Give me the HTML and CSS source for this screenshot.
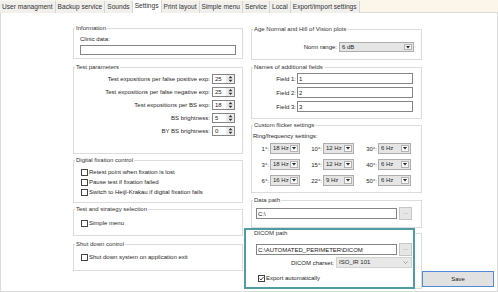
FILE: index.html
```html
<!DOCTYPE html>
<html>
<head>
    <title>Settings</title>
    <link rel="stylesheet" href="styles.css">
</head>
<body>
    <div class="tabs">
        <div class="tab">User managment</div>
        <div class="tab">Backup service</div>
        <div class="tab">Sounds</div>
        <div class="tab active">Settings</div>
        <div class="tab">Print layout</div>
        <div class="tab">Simple menu</div>
        <div class="tab">Service</div>
        <div class="tab">Local</div>
        <div class="tab">Export/import settings</div>
    </div>

    <div class="page">
        <!-- Left column -->
        <div class="col col-left">
            <fieldset class="group info">
                <legend>Information</legend>
                <div class="label">Clinic data:</div>
                <input class="textbox" type="text" value="">
            </fieldset>

            <fieldset class="group params">
                <legend>Test parameters</legend>
                <div class="param-row"><span>Test expositions per false positive exp:</span><div class="spin"><span class="spin-val">25</span><span class="spin-btn"><svg width="5" height="8" viewBox="0 0 5 8"><path d="M0.5 3.2 L2.5 1 L4.5 3.2 Z M0.5 4.8 L2.5 7 L4.5 4.8 Z" fill="#333"/></svg></span></div></div>
                <div class="param-row"><span>Test expositions per false negative exp:</span><div class="spin"><span class="spin-val">25</span><span class="spin-btn"><svg width="5" height="8" viewBox="0 0 5 8"><path d="M0.5 3.2 L2.5 1 L4.5 3.2 Z M0.5 4.8 L2.5 7 L4.5 4.8 Z" fill="#333"/></svg></span></div></div>
                <div class="param-row"><span>Test expositions per BS exp:</span><div class="spin"><span class="spin-val">18</span><span class="spin-btn"><svg width="5" height="8" viewBox="0 0 5 8"><path d="M0.5 3.2 L2.5 1 L4.5 3.2 Z M0.5 4.8 L2.5 7 L4.5 4.8 Z" fill="#333"/></svg></span></div></div>
                <div class="param-row"><span>BS brightness:</span><div class="spin"><span class="spin-val">5</span><span class="spin-btn"><svg width="5" height="8" viewBox="0 0 5 8"><path d="M0.5 3.2 L2.5 1 L4.5 3.2 Z M0.5 4.8 L2.5 7 L4.5 4.8 Z" fill="#333"/></svg></span></div></div>
                <div class="param-row"><span>BY BS brightness:</span><div class="spin"><span class="spin-val">0</span><span class="spin-btn"><svg width="5" height="8" viewBox="0 0 5 8"><path d="M0.5 3.2 L2.5 1 L4.5 3.2 Z M0.5 4.8 L2.5 7 L4.5 4.8 Z" fill="#333"/></svg></span></div></div>
            </fieldset>

            <fieldset class="group fixation">
                <legend>Digital fixation control</legend>
                <div class="check-row"><span class="box"></span>Retest point when fixation is lost</div>
                <div class="check-row"><span class="box"></span>Pause test if fixation failed</div>
                <div class="check-row"><span class="box"></span>Switch to Heijl-Krakau if digital fixation fails</div>
            </fieldset>

            <fieldset class="group strategy">
                <legend>Test and strategy selection</legend>
                <div class="check-row"><span class="box"></span>Simple menu</div>
            </fieldset>

            <fieldset class="group shutdown">
                <legend>Shut down control</legend>
                <div class="check-row"><span class="box"></span>Shut down system on application exit</div>
            </fieldset>
        </div>

        <!-- Right column -->
        <div class="col col-right">
            <fieldset class="group age">
                <legend>Age Normal and Hill of Vision plots</legend>
                <div class="norm-row">
                    <span>Norm range:</span>
                    <div class="combo norm"><span class="combo-val">6 dB</span><span class="combo-btn"><svg width="4" height="3" viewBox="0 0 4 3"><path d="M0 0 H4 L2 2.5 Z" fill="#222"/></svg></span></div>
                </div>
            </fieldset>

            <fieldset class="group names">
                <legend>Names of additional fields</legend>
                <div class="field-row"><span>Field 1:</span><input class="textbox" type="text" value="1"></div>
                <div class="field-row"><span>Field 2:</span><input class="textbox" type="text" value="2"></div>
                <div class="field-row"><span>Field 3:</span><input class="textbox" type="text" value="3"></div>
            </fieldset>

            <fieldset class="group flicker">
                <legend>Custom flicker settings</legend>
                <div class="label ring">Ring/frequency settings:</div>
                <div class="freq-grid">
                    <span class="freq-label">1°:</span>
                    <div class="combo"><span class="combo-val">18 Hz</span><span class="combo-btn"><svg width="4" height="3" viewBox="0 0 4 3"><path d="M0 0 H4 L2 2.5 Z" fill="#222"/></svg></span></div>
                    <span class="freq-label">10°:</span>
                    <div class="combo"><span class="combo-val">12 Hz</span><span class="combo-btn"><svg width="4" height="3" viewBox="0 0 4 3"><path d="M0 0 H4 L2 2.5 Z" fill="#222"/></svg></span></div>
                    <span class="freq-label">30°:</span>
                    <div class="combo"><span class="combo-val">6 Hz</span><span class="combo-btn"><svg width="4" height="3" viewBox="0 0 4 3"><path d="M0 0 H4 L2 2.5 Z" fill="#222"/></svg></span></div>

                    <span class="freq-label">3°:</span>
                    <div class="combo"><span class="combo-val">18 Hz</span><span class="combo-btn"><svg width="4" height="3" viewBox="0 0 4 3"><path d="M0 0 H4 L2 2.5 Z" fill="#222"/></svg></span></div>
                    <span class="freq-label">15°:</span>
                    <div class="combo"><span class="combo-val">12 Hz</span><span class="combo-btn"><svg width="4" height="3" viewBox="0 0 4 3"><path d="M0 0 H4 L2 2.5 Z" fill="#222"/></svg></span></div>
                    <span class="freq-label">40°:</span>
                    <div class="combo"><span class="combo-val">6 Hz</span><span class="combo-btn"><svg width="4" height="3" viewBox="0 0 4 3"><path d="M0 0 H4 L2 2.5 Z" fill="#222"/></svg></span></div>

                    <span class="freq-label">6°:</span>
                    <div class="combo"><span class="combo-val">16 Hz</span><span class="combo-btn"><svg width="4" height="3" viewBox="0 0 4 3"><path d="M0 0 H4 L2 2.5 Z" fill="#222"/></svg></span></div>
                    <span class="freq-label">22°:</span>
                    <div class="combo"><span class="combo-val">9 Hz</span><span class="combo-btn"><svg width="4" height="3" viewBox="0 0 4 3"><path d="M0 0 H4 L2 2.5 Z" fill="#222"/></svg></span></div>
                    <span class="freq-label">50°:</span>
                    <div class="combo"><span class="combo-val">6 Hz</span><span class="combo-btn"><svg width="4" height="3" viewBox="0 0 4 3"><path d="M0 0 H4 L2 2.5 Z" fill="#222"/></svg></span></div>
                </div>
            </fieldset>

            <fieldset class="group datapath">
                <legend>Data path</legend>
                <div class="path-row"><input class="textbox" type="text" value="C:\"><span class="dots">...</span></div>
            </fieldset>

            <div class="dicom-wrap">
                <!-- highlight frame drawn over the DICOM box -->
                <div class="highlight"></div>
                <fieldset class="group dicom">
                    <legend>DICOM path</legend>
                    <div class="path-row"><input class="textbox" type="text" value="C:\AUTOMATED_PERIMETER\DICOM"><span class="dots">...</span></div>
                    <div class="charset-row">
                        <span>DICOM charset:</span>
                        <div class="flat-select"><span class="combo-val">ISO_IR 101</span><svg width="5" height="3" viewBox="0 0 5 3"><path d="M0.5 0.5 L2.5 2.5 L4.5 0.5" fill="none" stroke="#8a8a8a" stroke-width="0.8"/></svg></div>
                    </div>
                    <div class="check-row export"><span class="box checked"><svg width="5" height="5" viewBox="0 0 5 5"><path d="M0.6 2.6 L2 4 L4.5 1" fill="none" stroke="#333" stroke-width="0.9"/></svg></span>Export automatically</div>
                </fieldset>
            </div>
        </div>

        <div class="save-area">
            <button class="save">Save</button>
        </div>
    </div>
</body>
</html>
```

FILE: styles.css
```css
* {
    box-sizing: border-box;
}
body {
    margin: 0;
    width: 498px;
    height: 292px;
    overflow: hidden;
    font-family: "Liberation Sans", Arial, sans-serif;
    font-size: 6px;
    color: #262626;
    background-color: #fff;
}

/* Tab strip */
.tabs {
    display: flex;
    align-items: flex-end;
    height: 13px;
    background-color: #fcf6ea;
    border-bottom: 1px solid #dadada;
}
.tab {
    height: 12px;
    line-height: 12px;
    padding: 0 2px;
    font-size: 6.6px;
    color: #333;
    background-color: #f1f0ed;
    border-right: 1px solid #d6d6d6;
    margin-bottom: -1px;
}
.tab.active {
    height: 13px;
    background-color: #fff;
}

/* Page body */
.page {
    display: flex;
    height: 279px;
    border: 1px solid #dadada;
    border-top: 0;
    padding: 11px 0 0 72px;
}
.col-left {
    width: 173px;
}
.col-right {
    width: 174px;
    margin-left: 8px;
    padding-top: 1px;
}
.save-area {
    flex: 1;
    display: flex;
    align-items: flex-end;
    justify-content: flex-end;
    padding: 0 3px 4px 0;
}

/* Group boxes */
.group {
    margin: 0;
    padding: 0 6px;
    min-width: 0;
    border: 1px solid #dcdcdc;
}
.group legend {
    padding: 0 1px;
    margin-left: -5px;
    line-height: 8px;
    color: #333;
}
.label {
    line-height: 8px;
}
.textbox {
    display: block;
    height: 11px;
    padding: 0 1px;
    font: inherit;
    color: #222;
    border: 1px solid #858585;
    background-color: #fff;
    outline: none;
}

/* Information */
.info {
    padding-bottom: 3px;
}
.info .label {
    margin-top: 3px;
}
.info .textbox {
    width: 100%;
    height: 10px;
    margin-top: 2px;
}

/* Test parameters */
.params {
    margin-top: 4px;
    padding-right: 7px;
    padding-bottom: 17px;
}
.param-row {
    display: flex;
    justify-content: flex-end;
    align-items: center;
    gap: 2px;
    height: 10px;
    margin-top: 3px;
}
.spin {
    display: flex;
    width: 23px;
    height: 10px;
    border: 1px solid #858585;
    background-color: #fff;
}
.spin-val {
    flex: 1;
    padding-left: 2px;
    line-height: 8px;
}
.spin-btn {
    display: flex;
    align-items: center;
    justify-content: center;
    width: 8px;
    background-color: #ececec;
}

/* Checkboxes */
.check-row {
    display: flex;
    align-items: center;
    gap: 1px;
    height: 10px;
    padding-left: 1px;
}
.box {
    display: flex;
    align-items: center;
    justify-content: center;
    width: 7px;
    height: 7px;
    border: 1px solid #444;
    background-color: #fff;
}
.fixation {
    margin-top: 2px;
    padding-top: 3px;
    padding-bottom: 5px;
}
.strategy {
    margin-top: 2px;
    padding-top: 5px;
    padding-bottom: 7px;
}
.shutdown {
    margin-top: 4px;
    padding-top: 4px;
    padding-bottom: 8px;
}

/* Combo boxes */
.combo {
    display: flex;
    height: 11px;
    border: 1px solid #adadad;
    background-color: #e5e5e5;
}
.combo-val {
    flex: 1;
    padding-left: 2px;
    line-height: 9px;
    white-space: nowrap;
}
.combo-btn {
    display: flex;
    align-items: center;
    justify-content: center;
    width: 8px;
    margin: 1px;
    background-color: #f6f6f6;
    border: 1px solid #b3b3b3;
}

/* Age normal */
.age {
    padding-top: 9px;
    padding-right: 7px;
    padding-bottom: 7px;
}
.norm-row {
    display: flex;
    justify-content: flex-end;
    align-items: center;
    gap: 2px;
}
.combo.norm {
    width: 75px;
    height: 10px;
}
.combo.norm .combo-val {
    line-height: 8px;
}

/* Names of additional fields */
.names {
    margin-top: 3px;
    padding-top: 2px;
    padding-right: 8px;
    padding-bottom: 6px;
}
.field-row {
    display: flex;
    justify-content: flex-end;
    align-items: center;
    gap: 1px;
}
.field-row + .field-row {
    margin-top: 3px;
}
.field-row .textbox {
    width: 116px;
}

/* Flicker */
.flicker {
    margin-top: 2px;
    padding-bottom: 6px;
}
.ring {
    margin-top: 3px;
    margin-left: -5px;
}
.freq-grid {
    display: grid;
    grid-template-columns: 12px 30px 23px 31px 24px 33px;
    row-gap: 5px;
    margin-top: 3px;
    align-items: center;
}
.freq-label {
    justify-self: end;
    padding-right: 1px;
    white-space: nowrap;
}

/* Paths */
.datapath {
    margin-top: 3px;
    padding-top: 3px;
    padding-bottom: 7px;
}
.path-row {
    display: flex;
    align-items: center;
    gap: 2px;
    width: 156px;
    margin-left: -2px;
}
.path-row .textbox {
    width: 141px;
}
.dots {
    width: 13px;
    height: 13px;
    line-height: 9px;
    text-align: center;
    color: #8a8a8a;
    background-color: #e6e6e6;
    border: 1px solid #c6c6c6;
}

/* DICOM */
.dicom-wrap {
    position: relative;
    margin-top: 1px;
}
.dicom {
    padding-top: 6px;
    padding-bottom: 5px;
}
.dicom legend,
.dicom .path-row,
.dicom .charset-row,
.dicom .check-row {
    position: relative;
    z-index: 1;
}
.highlight {
    position: absolute;
    left: -7px;
    top: -1px;
    width: 171px;
    height: 61px;
    border: 2px solid #4f9ca3;
    background-color: #fff;
    z-index: 0;
}
.charset-row {
    display: flex;
    justify-content: flex-end;
    align-items: center;
    gap: 2px;
    width: 156px;
    margin: 1px 0 0 -2px;
}
.flat-select {
    display: flex;
    align-items: center;
    width: 76px;
    height: 11px;
    padding-right: 3px;
    background-color: #e8e8e8;
    border: 1px solid #d2d2d2;
}
.export {
    margin-top: 5px;
    padding-left: 0;
}

/* Save */
.save {
    width: 72px;
    height: 16px;
    padding: 0;
    font: inherit;
    color: #222;
    background-color: #e1e1e1;
    border: 1px solid #4f8ad6;
}
```
